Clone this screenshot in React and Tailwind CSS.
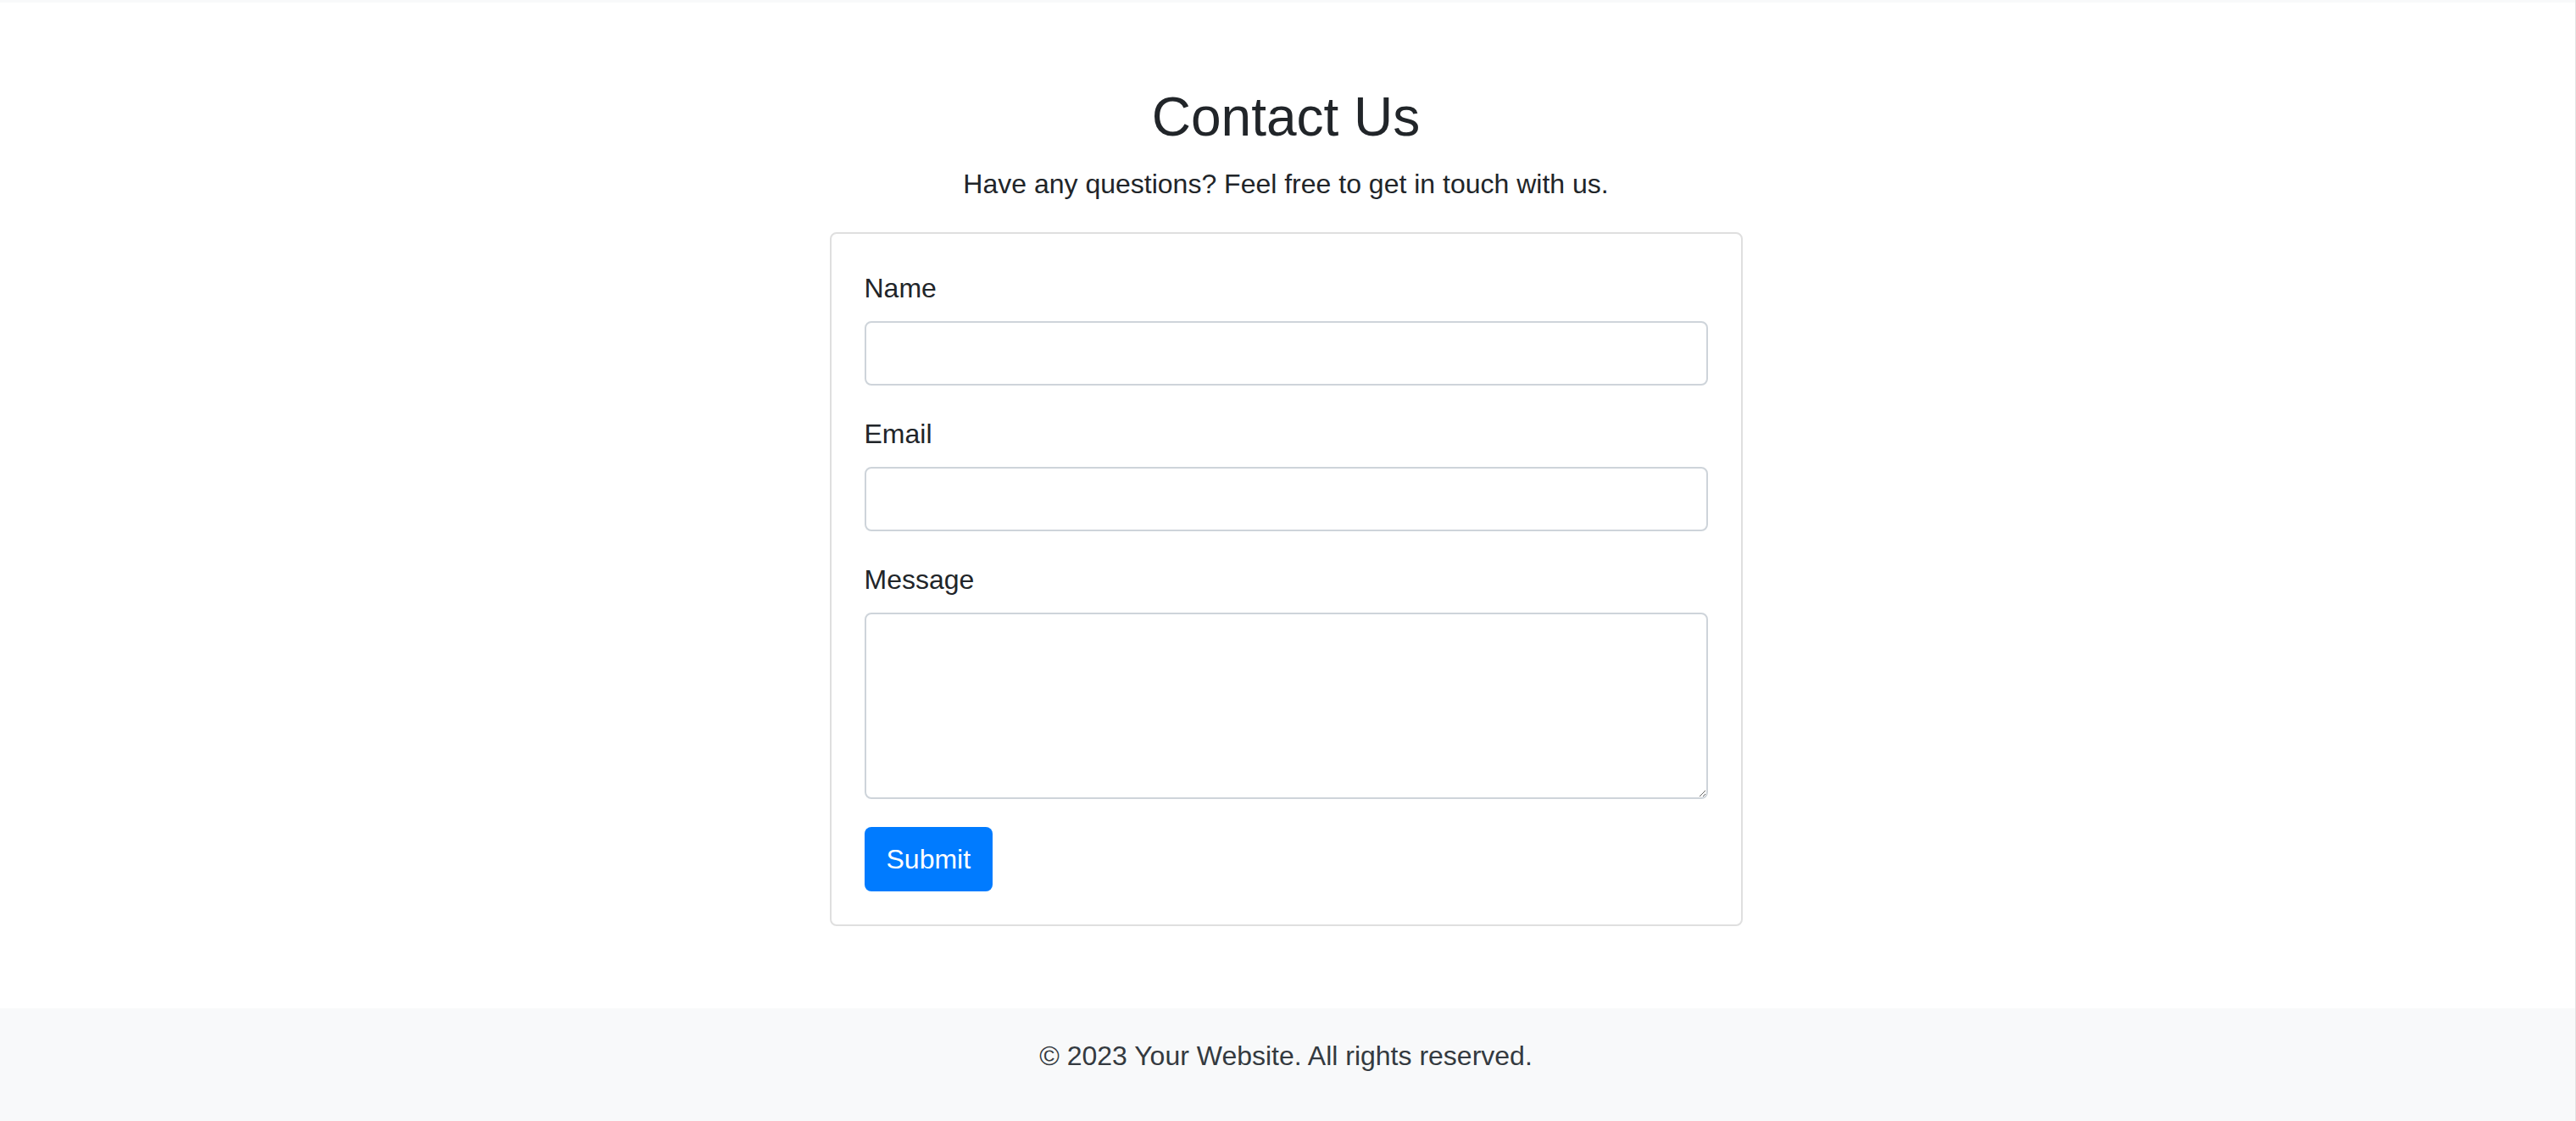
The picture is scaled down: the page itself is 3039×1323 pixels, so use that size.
import React from "react";

const FONT = { fontFamily: '"Liberation Sans", Arial, sans-serif' };

const Field = ({ id, label, children }) => (
  <div className="mb-[33px] flex flex-col">
    <label htmlFor={id} className="mb-[15px] text-[32px] leading-[48px] text-[#212529]">
      {label}
    </label>
    {children}
  </div>
);

const inputCls =
  "block w-full h-[76px] px-[23px] text-[32px] text-[#495057] bg-white border-2 border-[#ced4da] rounded-[8px] outline-none";

const App = () => {
  return (
    <div
      className="min-h-screen w-full flex flex-col bg-white border-r border-[#e2e2e2] text-[#212529]"
      style={FONT}
    >
      {/* empty navbar strip */}
      <div className="h-[3px] bg-[#f8f9fa] shrink-0"></div>

      <main className="flex-1 flex flex-col items-center pt-[97px] pb-[97px] pr-[4px]">
        <h1 className="text-[64px] leading-[77px] font-normal mb-[16px]">Contact Us</h1>
        <p className="text-[32px] leading-[48px] mb-[33px]">
          Have any questions? Feel free to get in touch with us.
        </p>

        <div className="w-[1077px] border-2 border-[#dfdfdf] rounded-[8px] bg-white pt-[40px] px-[39px] pb-[39px]">
          <form onSubmit={(e) => e.preventDefault()}>
            <Field id="name" label="Name">
              <input id="name" type="text" className={inputCls} />
            </Field>
            <Field id="email" label="Email">
              <input id="email" type="email" className={inputCls} />
            </Field>
            <Field id="message" label="Message">
              <textarea
                id="message"
                className="block w-full h-[220px] px-[23px] py-[12px] text-[32px] text-[#495057] bg-white border-2 border-[#ced4da] rounded-[8px] outline-none"
              ></textarea>
            </Field>
            <button
              type="submit"
              className="h-[76px] px-[26px] bg-[#007bff] text-white text-[32px] leading-[48px] rounded-[8px]"
            >
              Submit
            </button>
          </form>
        </div>
      </main>

      <footer className="h-[134px] shrink-0 bg-[#f8f9fa] pt-[32px] pr-[4px] text-center">
        <p className="text-[32px] leading-[48px] text-[#343a40]">
          © 2023 Your Website. All rights reserved.
        </p>
      </footer>
    </div>
  );
};

export default App;
